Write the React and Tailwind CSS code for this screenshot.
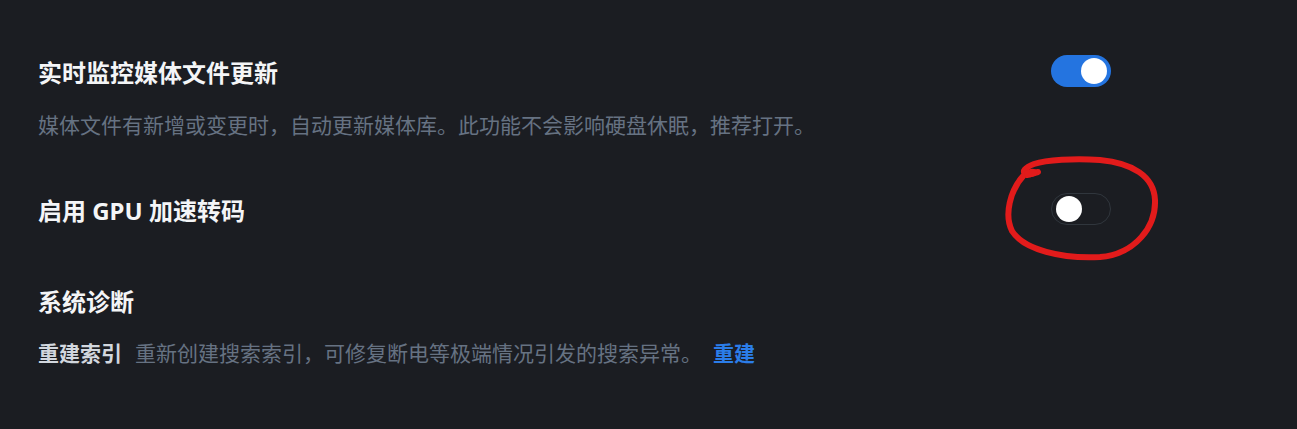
import React from 'react'

const FONT = { fontFamily: '"Noto Sans", "Noto Sans CJK SC", sans-serif' }

function Toggle({ on }) {
  return on ? (
    <div className="flex h-8 w-[60px] shrink-0 items-center justify-end rounded-full bg-[#2474e0] px-[4px]">
      <span className="h-[26px] w-[26px] rounded-full bg-white" />
    </div>
  ) : (
    <div className="flex h-8 w-[60px] shrink-0 items-center justify-start rounded-full border border-[#30363d] px-[4px]">
      <span className="h-[26px] w-[26px] rounded-full bg-white" />
    </div>
  )
}

function SettingRow({ title, desc, on }) {
  return (
    <div>
      <div className="flex items-start justify-between">
        <div className="text-[24px] font-bold leading-[36px] text-[#f4f5f7]">{title}</div>
        <Toggle on={on} />
      </div>
      {desc && (
        <div className="mt-[19px] text-[21px] leading-[31px] text-[#667282]">{desc}</div>
      )}
    </div>
  )
}

export default function App() {
  return (
    <div className="relative h-[429px] w-full overflow-hidden bg-[#1b1d22]" style={FONT}>
      <div className="ml-[38px] w-[1073px] pt-[55px]">
        <SettingRow
          on
          title="实时监控媒体文件更新"
          desc="媒体文件有新增或变更时，自动更新媒体库。此功能不会影响硬盘休眠，推荐打开。"
        />
        <div className="mt-[52px]">
          <SettingRow title="启用 GPU 加速转码" />
        </div>

        {/* 系统诊断 */}
        <div className="mt-[55px] text-[24px] font-bold leading-[36px] text-[#f4f5f7]">系统诊断</div>
        <div className="mt-[18px] flex items-center text-[21px] leading-[31px]">
          <span className="font-bold text-[#d2d7de]">重建索引</span>
          <span className="ml-[13px] text-[#667282]">重新创建搜索索引，可修复断电等极端情况引发的搜索异常。</span>
          <button className="ml-[11px] font-bold text-[#2b7de9]">重建</button>
        </div>
      </div>

      {/* hand-drawn annotation */}
      <svg className="pointer-events-none absolute left-0 top-0" width="1297" height="429">
        <path
          d="M1024,175 C1010,190 1004,215 1012,231 C1024,250 1062,259 1100,257 C1136,254 1156,226 1155,200 C1154,176 1132,163 1100,160 C1074,158 1046,160 1034,164 C1026,167 1020,172 1027,175 L1038,172"
          fill="none"
          stroke="#e21b1b"
          strokeWidth="6"
          strokeLinecap="round"
          strokeLinejoin="round"
        />
        <ellipse cx="1031" cy="173" rx="7" ry="4" fill="#e21b1b" transform="rotate(-10 1031 173)" />
      </svg>
    </div>
  )
}
